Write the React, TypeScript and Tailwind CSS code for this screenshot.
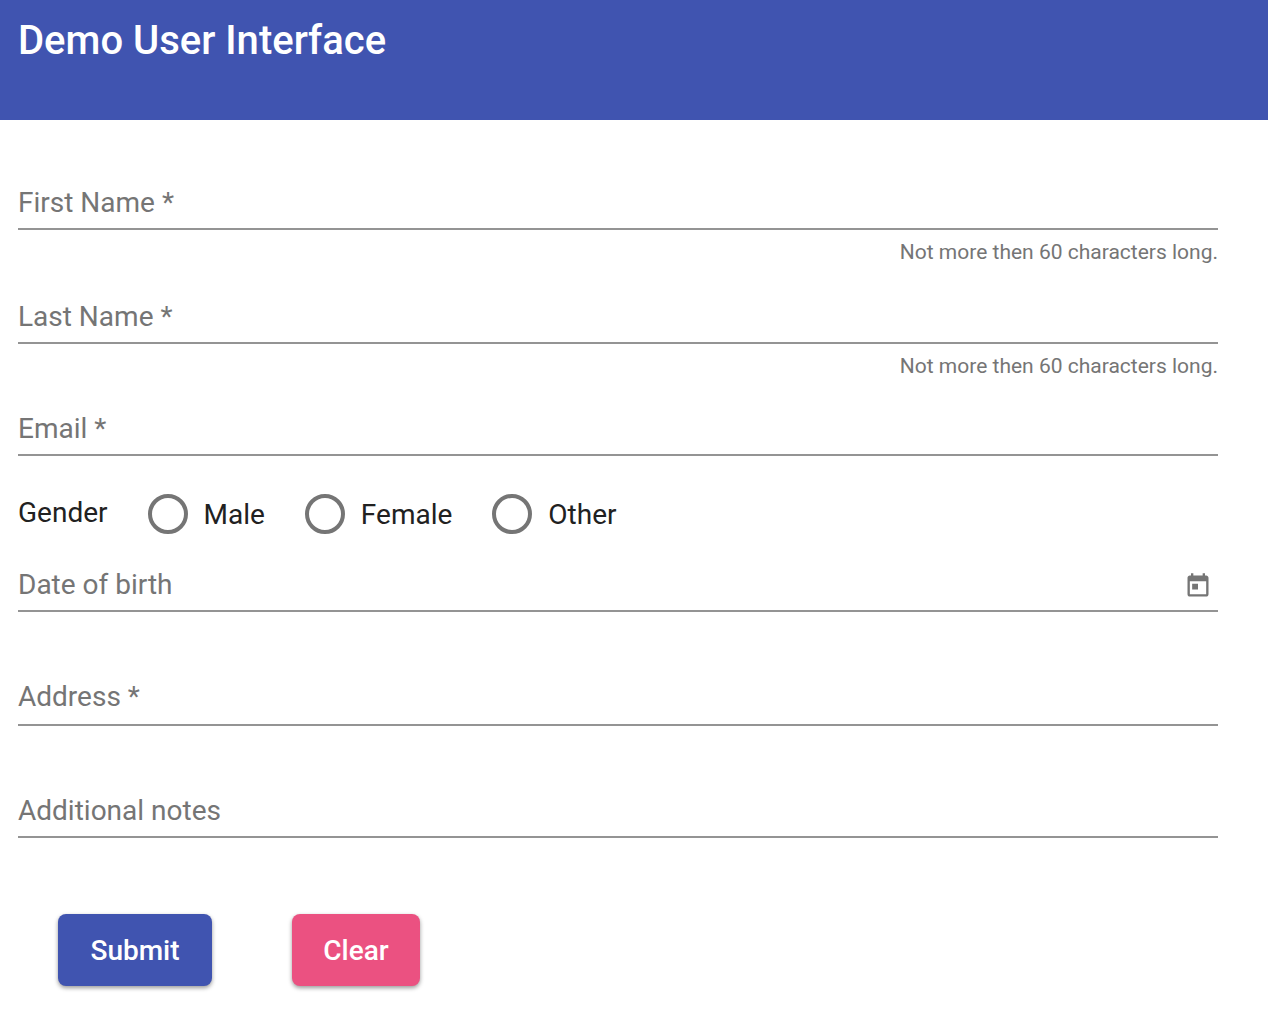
import type { ReactNode } from "react";

const controlClass =
  "peer col-start-1 row-start-1 block w-full resize-none overflow-hidden border-b-2 border-[#949494] bg-transparent pb-2 text-[28px] leading-[34px] text-[#212121] focus:border-[#4054b0] focus:outline-none";

type FieldProps = {
  id: string;
  label: string;
  hint?: string;
  multiline?: boolean;
  children?: ReactNode;
};

function Field({ id, label, hint, multiline, children }: FieldProps) {
  return (
    <div className="relative">
      <div className="grid">
        {multiline ? (
          <textarea id={id} rows={1} placeholder=" " className={`${controlClass} h-[46px]`} />
        ) : (
          <input id={id} type="text" placeholder=" " className={`${controlClass} h-11`} />
        )}
        <label
          htmlFor={id}
          className="pointer-events-none col-start-1 row-start-1 self-start justify-self-start text-[28px] leading-[34px] text-[#757575] peer-focus:-mt-6 peer-focus:text-[21px] peer-[:not(:placeholder-shown)]:-mt-6 peer-[:not(:placeholder-shown)]:text-[21px]"
        >
          {label}
        </label>
      </div>
      {children}
      {hint && <p className="mt-2 text-right text-[21px] leading-7 text-[#757575]">{hint}</p>}
    </div>
  );
}

function CalendarIcon() {
  return (
    <svg viewBox="0 0 24 24" className="size-7" fill="currentColor" aria-hidden="true">
      <path d="M19 3h-1V1h-2v2H8V1H6v2H5c-1.11 0-1.99.9-1.99 2L3 19c0 1.1.89 2 2 2h14c1.1 0 2-.9 2-2V5c0-1.1-.9-2-2-2zm0 16H5V8h14v11zM7 10h5v5H7z" />
    </svg>
  );
}

function Radio({ label }: { label: string }) {
  return (
    <label className="flex items-center gap-4 text-[28px] leading-8 text-[#212121]">
      <input
        type="radio"
        name="gender"
        className="size-10 appearance-none rounded-full border-4 border-[#757575] checked:bg-[#4054b0] checked:bg-clip-content checked:p-1"
      />
      <span className="pt-0.5">{label}</span>
    </label>
  );
}

export default function App() {
  return (
    <div className="min-h-screen bg-white font-['Roboto',sans-serif]">
      <header className="h-[120px] bg-[#4054b0] px-[18px] pt-5">
        <h1 className="text-[40px] leading-[42px] font-medium text-white">Demo User Interface</h1>
      </header>
      <form className="pt-[66px] pr-[50px] pb-8 pl-[18px]" onSubmit={(e) => e.preventDefault()}>
        <Field id="first" label="First Name *" hint="Not more then 60 characters long." />
        <div className="mt-[34px]">
          <Field id="last" label="Last Name *" hint="Not more then 60 characters long." />
        </div>
        <div className="mt-8">
          <Field id="email" label="Email *" />
        </div>
        <div role="radiogroup" aria-labelledby="gender" className="mt-[38px] flex flex-wrap items-center gap-x-10 gap-y-4">
          <span id="gender" className="pb-0.5 text-[28px] leading-8 text-[#212121]">Gender</span>
          <Radio label="Male" />
          <Radio label="Female" />
          <Radio label="Other" />
        </div>
        <div className="mt-[34px]">
          <Field id="birth" label="Date of birth">
            <button type="button" aria-label="Open calendar" className="absolute top-1 right-[6px] text-[#757575]">
              <CalendarIcon />
            </button>
          </Field>
        </div>
        <div className="mt-[68px]">
          <Field id="address" label="Address *" multiline />
        </div>
        <div className="mt-[68px]">
          <Field id="notes" label="Additional notes" />
        </div>
        <div className="mt-[76px] flex gap-20 pl-10">
          <button
            type="submit"
            className="w-[154px] rounded-lg bg-[#4054b0] pt-[19px] pb-[17px] text-[28px] leading-9 font-medium text-white shadow-[0_2px_4px_rgba(0,0,0,0.4)]"
          >
            Submit
          </button>
          <button
            type="reset"
            className="w-32 rounded-lg bg-[#eb5181] pt-[19px] pb-[17px] text-[28px] leading-9 font-medium text-white shadow-[0_2px_4px_rgba(0,0,0,0.4)]"
          >
            Clear
          </button>
        </div>
      </form>
    </div>
  );
}
